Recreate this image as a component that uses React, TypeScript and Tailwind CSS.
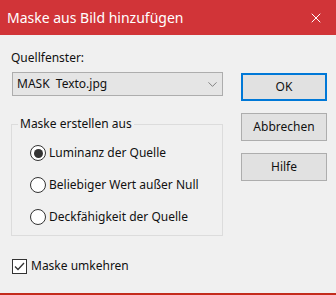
import { X, ChevronDown } from 'lucide-react';

const font = { fontFamily: '"Noto Sans", "Open Sans", sans-serif' };

function Radio({ label, checked }: { label: string; checked?: boolean }) {
  return (
    <div className="flex items-center h-[16px]">
      <span className="w-[16px] h-[16px] rounded-full border border-[#333333] bg-white flex items-center justify-center">
        {checked && <span className="w-[9px] h-[9px] rounded-full bg-[#333333]" />}
      </span>
      <span className="ml-[3px] text-[12px] text-[#111111] leading-none">{label}</span>
    </div>
  );
}

function Button({ label, primary }: { label: string; primary?: boolean }) {
  return (
    <button
      className={
        'w-[86px] h-[28px] bg-[#e1e1e1] text-[12px] text-[#111111] ' +
        (primary ? 'border-2 border-[#0078d7]' : 'border border-[#adadad]')
      }
    >
      {label}
    </button>
  );
}

export default function App() {
  return (
    <div
      className="w-[336px] h-[295px] bg-[#f0f0f0] flex flex-col border-b-2 border-[#c42b1c] overflow-hidden"
      style={font}
    >
      {/* Title bar */}
      <div className="h-[35px] bg-[#d13438] flex items-center justify-between pl-[7px] pr-[12px] shrink-0">
        <span className="text-white text-[14px]">Maske aus Bild hinzufügen</span>
        <X className="w-[16px] h-[16px] text-white" strokeWidth={1.5} />
      </div>

      {/* Body */}
      <div className="flex flex-1">
        <div className="w-[212px] ml-[11px] flex flex-col">
          <div className="mt-[15px] text-[12px] text-[#111111] leading-[16px]">Quellfenster:</div>
          <div className="mt-[6px] ml-[1px] h-[24px] bg-[#e5e5e5] border border-[#adadad] flex items-center justify-between pl-[4px] pr-[2px]">
            <span className="text-[12px] text-[#111111] whitespace-pre">MASK  Texto.jpg</span>
            <ChevronDown className="w-[15px] h-[15px] text-[#555555]" strokeWidth={1.1} />
          </div>

          <fieldset className="mt-[21px] border border-[#dcdcdc] h-[119px]">
            <legend className="ml-[6px] px-[2px] text-[12px] text-[#111111] leading-[14px]">
              Maske erstellen aus
            </legend>
            <div className="flex flex-col gap-[16px] mt-[14px] pl-[18px]">
              <Radio label="Luminanz der Quelle" checked />
              <Radio label="Beliebiger Wert außer Null" />
              <Radio label="Deckfähigkeit der Quelle" />
            </div>
          </fieldset>

          <div className="mt-[21px] ml-[1px] flex items-center">
            <span className="w-[15px] h-[15px] border border-[#333333] bg-white flex items-center justify-center">
              <svg width="11" height="9" viewBox="0 0 11 9" fill="none">
                <path d="M1 4.5 L4 7.5 L10 1" stroke="#333333" strokeWidth="1.3" />
              </svg>
            </span>
            <span className="ml-[4px] text-[12px] text-[#111111]">Maske umkehren</span>
          </div>
        </div>

        <div className="ml-[18px] mt-[38px] flex flex-col gap-[12px]">
          <Button label="OK" primary />
          <Button label="Abbrechen" />
          <Button label="Hilfe" />
        </div>
      </div>
    </div>
  );
}
